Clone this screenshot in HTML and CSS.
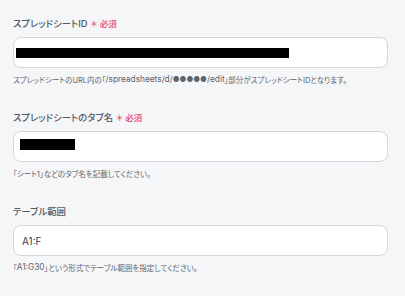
FILE: index.html
```html
<!DOCTYPE html>
<html lang="ja">
<head>
    <meta charset="UTF-8">
    <title>スプレッドシート設定</title>
    <link rel="stylesheet" href="styles.css">
</head>
<body>
    <div class="settings">
        <div class="field">
            <div class="label">スプレッドシートID <span class="required">＊ 必須</span></div>
            <div class="input"><span class="redacted redacted-id"></span></div>
            <p class="help">スプレッドシートのURL内の「<span class="latin">/spreadsheets/d/</span>●●●●●<span class="latin">/edit</span>」部分がスプレッドシートIDとなります。</p>
        </div>

        <div class="field">
            <div class="label">スプレッドシートのタブ名 <span class="required">＊ 必須</span></div>
            <div class="input"><span class="redacted redacted-tab"></span></div>
            <p class="help">「シート1」などのタブ名を記載してください。</p>
        </div>

        <div class="field">
            <div class="label">テーブル範囲</div>
            <div class="input">A1:F</div>
            <p class="help">「<span class="latin">A1:G30</span>」という形式でテーブル範囲を指定してください。</p>
        </div>
    </div>
</body>
</html>
```

FILE: styles.css
```css
body { margin: 0; background-color: #f5f6f8; font-family: "Inter", "Noto Sans CJK JP", sans-serif; font-feature-settings: "palt"; }
.settings { padding: 15px 17px 0 13px; display: flex; flex-direction: column; gap: 24px; }
.field { display: flex; flex-direction: column; }
.label { display: flex; align-items: center; height: 16px; font-size: 9.4px; font-weight: 500; color: #555a60; }
.required { font-size: 8.5px; color: #e5426d; margin-left: 3px; }
.input { margin-top: 6px; height: 31px; box-sizing: border-box; border: 1px solid #d3d6dc; border-radius: 8px; background-color: #fff; display: flex; align-items: center; padding: 0 8px; font-size: 10px; color: #3a3d42; }
.redacted { display: block; background-color: #000; height: 10px; }
.redacted-id { width: 273px; margin-left: -6px; }
.redacted-tab { width: 55px; height: 11px; margin-left: -2px; margin-top: -4px; }
.help { margin: 5px 0 0; height: 12px; display: flex; align-items: center; font-size: 7.5px; color: #5f646b; white-space: nowrap; }
.latin { font-size: 8.3px; }
```
